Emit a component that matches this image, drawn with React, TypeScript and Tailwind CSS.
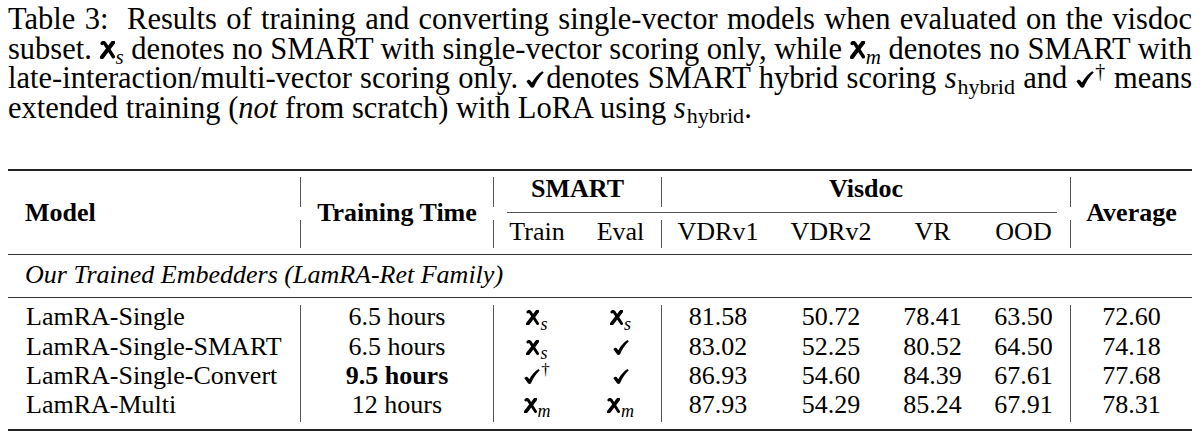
import React from "react";

function XGlyph({ big }: { big?: boolean }) {
  return (
    <svg
      viewBox="0 0 12 14"
      className={`inline-block align-baseline ${big ? "w-[15px] h-[17.5px]" : "w-[13px] h-[15px]"}`}
      fill="none"
      stroke="#000"
      strokeLinecap="round"
    >
      <path d="M1.7 1.9 C2.2 1.1 3.1 1.0 3.7 1.8 L10.7 12.6" strokeWidth="2.7" />
      <path d="M10.5 1.2 C7.6 4.9 4.7 8.8 1.5 13" strokeWidth="3.3" />
    </svg>
  );
}

function CheckGlyph({ big, cls = "" }: { big?: boolean; cls?: string }) {
  return (
    <svg
      viewBox="0 0 16 15"
      className={`inline-block align-baseline ${big ? "w-[18px] h-[17px]" : "w-[16px] h-[15px]"} ${cls}`}
      fill="#000"
    >
      <path d="M0.4 9.2 C1.3 7.8 2.9 7.3 3.8 8.3 L5.3 10.2 C7.7 6.0 10.6 2.6 14.4 0.1 L15.8 1.3 C12.2 4.6 9.3 9.0 7.2 14.0 C6.6 15.1 4.7 15.2 4.0 14.2 Z" />
    </svg>
  );
}

function XS({ m, big }: { m: string; big?: boolean }) {
  return (
    <span className="whitespace-nowrap">
      <XGlyph big={big} />
      <sub className={`italic ml-[1px] ${big ? "text-[21px]" : "text-[18px]"}`}>{m}</sub>
    </span>
  );
}

function Check({ dagger, big, cls }: { dagger?: boolean; big?: boolean; cls?: string }) {
  return (
    <span className="whitespace-nowrap">
      <CheckGlyph big={big} cls={cls} />
      {dagger ? <sup className={`ml-[1px] ${big ? "text-[20px]" : "text-[17px]"}`}>†</sup> : null}
    </span>
  );
}

function SHybrid() {
  return (
    <span className="whitespace-nowrap">
      <span className="italic">s</span>
      <sub className="text-[22px] not-italic ml-[1px]">hybrid</sub>
    </span>
  );
}

const Bar = ({ cls }: { cls: string }) => <div className={`bg-[#555] w-px ${cls}`} />;

type Row = {
  model: string;
  time: React.ReactNode;
  train: React.ReactNode;
  evalv: React.ReactNode;
  nums: string[];
  avg: string;
};

const rows: Row[] = [
  {
    model: "LamRA-Single",
    time: "6.5 hours",
    train: <XS m="s" />,
    evalv: <XS m="s" />,
    nums: ["81.58", "50.72", "78.41", "63.50"],
    avg: "72.60",
  },
  {
    model: "LamRA-Single-SMART",
    time: "6.5 hours",
    train: <XS m="s" />,
    evalv: <Check />,
    nums: ["83.02", "52.25", "80.52", "64.50"],
    avg: "74.18",
  },
  {
    model: "LamRA-Single-Convert",
    time: <span className="font-bold">9.5 hours</span>,
    train: <Check dagger />,
    evalv: <Check />,
    nums: ["86.93", "54.60", "84.39", "67.61"],
    avg: "77.68",
  },
  {
    model: "LamRA-Multi",
    time: "12 hours",
    train: <XS m="m" />,
    evalv: <XS m="m" />,
    nums: ["87.93", "54.29", "85.24", "67.91"],
    avg: "78.31",
  },
];

const cols =
  "grid grid-cols-[292px_1px_192px_1px_86px_81px_1px_112px_114px_89px_93px_1px_121px]";

export default function App() {
  return (
    <div className="w-[1200px] h-[440px] bg-white text-black px-[8px] pt-[5px] [font-family:'Liberation_Serif','Times_New_Roman',serif] overflow-hidden">
      {/* Caption */}
      <div className="text-[30.5px] leading-[29.6px]">
        <div className="text-justify [text-align-last:justify] whitespace-nowrap">
          Table 3:&nbsp; Results of training and converting single-vector models when evaluated on the visdoc
        </div>
        <div className="text-justify [text-align-last:justify] whitespace-nowrap">
          subset. <XS m="s" big /> denotes no SMART with single-vector scoring only, while <XS m="m" big /> denotes no SMART with
        </div>
        <div className="text-justify [text-align-last:justify] whitespace-nowrap">
          late-interaction/multi-vector scoring only. <Check big cls="mr-[2px]" />denotes SMART hybrid scoring <SHybrid /> and <Check dagger big /> means
        </div>
        <div className="whitespace-nowrap">
          extended training (<span className="italic">not</span> from scratch) with LoRA using <SHybrid />.
        </div>
      </div>

      {/* Table */}
      <div className="mt-[46px] text-[26px] leading-[24px]">
        <div className="h-[2px] bg-[#222]" />
        {/* Header */}
        <div className={`${cols} grid-rows-[30px_13px_28px] mt-[6px]`}>
          <div className="col-start-1 row-start-1 row-span-3 flex items-center pl-[17px] font-bold">Model</div>
          <Bar cls="col-start-2 row-start-1" />
          <Bar cls="col-start-2 row-start-3" />
          <div className="col-start-3 row-start-1 row-span-3 flex items-center justify-center font-bold">Training Time</div>
          <Bar cls="col-start-4 row-start-1" />
          <Bar cls="col-start-4 row-start-3" />
          <div className="col-start-5 col-span-2 row-start-1 text-center font-bold">SMART</div>
          <Bar cls="col-start-7 row-start-1" />
          <Bar cls="col-start-7 row-start-3" />
          <div className="col-start-8 col-span-4 row-start-1 text-center font-bold">Visdoc</div>
          <Bar cls="col-start-12 row-start-1" />
          <Bar cls="col-start-12 row-start-3" />
          <div className="col-start-13 row-start-1 row-span-3 flex items-center justify-center font-bold">Average</div>
          <div className="col-start-5 col-span-7 row-start-2 pt-[5px] px-[13px]">
            <div className="h-px bg-[#555]" />
          </div>
          <div className="col-start-5 row-start-3 text-center">Train</div>
          <div className="col-start-6 row-start-3 text-center">Eval</div>
          <div className="col-start-8 row-start-3 text-center">VDRv1</div>
          <div className="col-start-9 row-start-3 text-center">VDRv2</div>
          <div className="col-start-10 row-start-3 text-center">VR</div>
          <div className="col-start-11 row-start-3 text-center">OOD</div>
        </div>
        <div className="h-px bg-[#333] mt-[6px]" />
        {/* Section */}
        <div className="h-[42px] pt-[8px] pl-[17px] italic">Our Trained Embedders (LamRA-Ret Family)</div>
        <div className="h-px bg-[#333]" />
        {/* Body */}
        <div className={`${cols} grid-rows-[repeat(4,29.2px)] mt-[7px]`}>
          <Bar cls="col-start-2 row-start-1 row-span-4" />
          <Bar cls="col-start-4 row-start-1 row-span-4" />
          <Bar cls="col-start-7 row-start-1 row-span-4" />
          <Bar cls="col-start-12 row-start-1 row-span-4" />
          {rows.map((r, i) => (
            <React.Fragment key={r.model}>
              <div className="col-start-1 pl-[18px] whitespace-nowrap" style={{ gridRowStart: i + 1 }}>{r.model}</div>
              <div className="col-start-3 text-center" style={{ gridRowStart: i + 1 }}>{r.time}</div>
              <div className="col-start-5 text-center" style={{ gridRowStart: i + 1 }}>{r.train}</div>
              <div className="col-start-6 text-center" style={{ gridRowStart: i + 1 }}>{r.evalv}</div>
              {r.nums.map((n, j) => (
                <div
                  key={j}
                  className="text-center"
                  style={{ gridRowStart: i + 1, gridColumnStart: [8, 9, 10, 11][j] }}
                >
                  {n}
                </div>
              ))}
              <div className="col-start-13 text-center" style={{ gridRowStart: i + 1 }}>{r.avg}</div>
            </React.Fragment>
          ))}
        </div>
        <div className="h-[2px] bg-[#222] mt-[7px]" />
      </div>
    </div>
  );
}
